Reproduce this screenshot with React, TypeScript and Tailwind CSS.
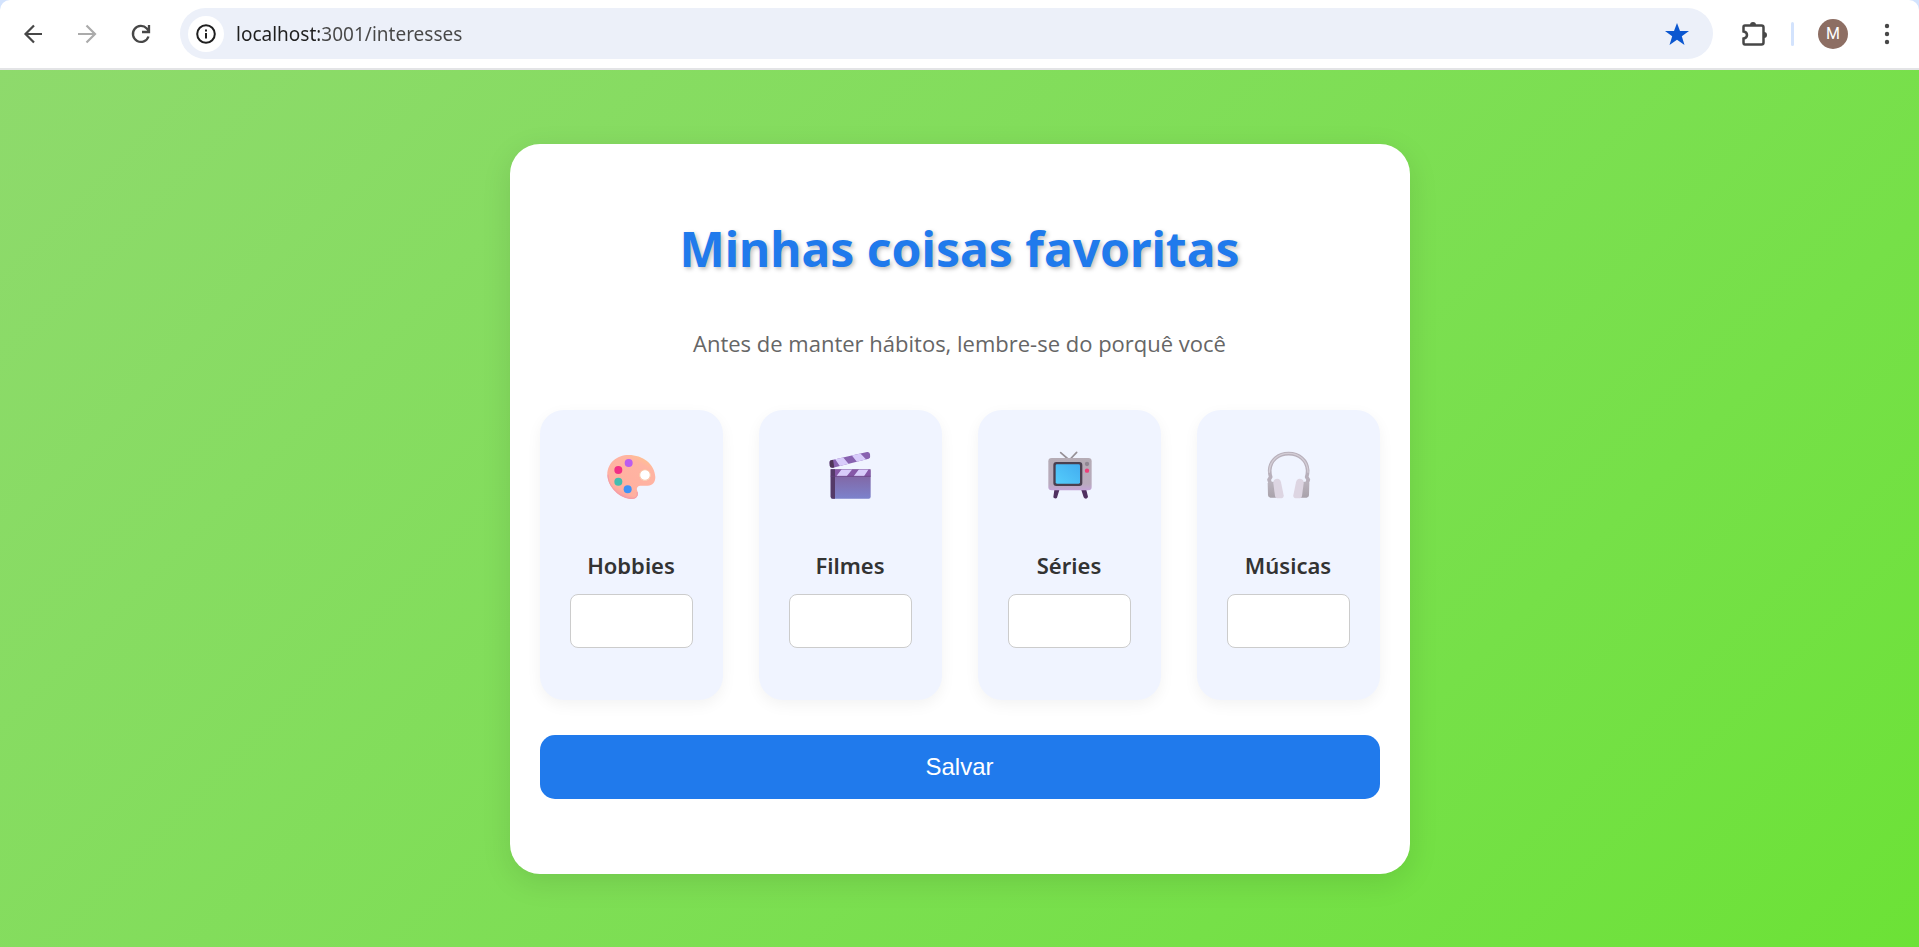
import type { ReactNode } from "react";

function PaletteIcon() {
  return (
    <svg viewBox="78 63 153 153" className="size-[51px]" aria-hidden="true">
      <defs>
        <linearGradient id="pal" x1="0.2" y1="1" x2="0.8" y2="0">
          <stop offset="0" stopColor="#f88fa0" />
          <stop offset="0.2" stopColor="#ffb0a0" />
          <stop offset="0.8" stopColor="#ffb4a2" />
          <stop offset="1" stopColor="#ffc58a" />
        </linearGradient>
      </defs>
      <path
        fillRule="evenodd"
        fill="url(#pal)"
        d="M146 75C110 75 82 99 82 134C82 171 120 207 157 207C172 207 177 194 172 183C168 173 173 167 184 167L203 167C218 167 226 156 226 141C224 101 188 75 146 75ZM195 119A16.500 16.500 0 1 1 195 152A16.500 16.500 0 1 1 195 119Z"
      />
      <path d="M84 134C84 171 121 205 157 205C170 205 174 195 171 186" fill="none" stroke="#f39cab" strokeWidth="3" />
      <circle cx="195" cy="135" r="16" fill="#ffffff" stroke="#fcc3a0" strokeWidth="3" />
      <circle cx="146" cy="99" r="12" fill="#bb5cf0" />
      <circle cx="115" cy="120" r="12" fill="#f12f86" />
      <circle cx="115" cy="155" r="12" fill="#43bdb0" />
      <circle cx="143" cy="178" r="12" fill="#3f92f7" />
    </svg>
  );
}

function ClapperIcon() {
  return (
    <svg viewBox="75 63 153 153" className="size-[51px]" aria-hidden="true">
      <defs>
        <linearGradient id="clapBody" x1="0" y1="0" x2="0" y2="1">
          <stop offset="0" stopColor="#83609b" />
          <stop offset="1" stopColor="#7c82cc" />
        </linearGradient>
        <clipPath id="clapArm">
          <path d="M93 91L201 66Q208 65 210 72L211 79Q211 84 206 86L99 113Q91 115 89 107L88 98Q88 92 93 91Z" />
        </clipPath>
        <clipPath id="clapStrip">
          <path d="M92 118H207Q212 118 212 123V140H92Z" />
        </clipPath>
      </defs>
      <g clipPath="url(#clapArm)">
        <path d="M80 60H220V120H80Z" fill="#8862b0" />
        <path d="M103 84L126 78L148 104L122 112ZM152 72L177 66L200 90L173 98Z" fill="#d8ccfb" />
        <path d="M85 88H99L103 114H85Z" fill="#4e3558" />
      </g>
      <path d="M92 118H212V200Q212 206 206 206H98Q92 206 92 200Z" fill="url(#clapBody)" />
      <g clipPath="url(#clapStrip)">
        <path d="M92 116H214V140H92Z" fill="#8658a8" />
        <path d="M125 118H157L140 139H109ZM177 118H206L192 139H161Z" fill="#d8ccfb" />
      </g>
      <path d="M92 118H105V206H98Q92 206 92 200Z" fill="#543a68" />
      <path d="M92 139H212" stroke="#653f81" strokeWidth="2" />
    </svg>
  );
}

function TelevisionIcon() {
  return (
    <svg viewBox="72 63 153 153" className="size-[51px]" aria-hidden="true">
      <defs>
        <linearGradient id="tvBody" x1="0" y1="0" x2="0" y2="1">
          <stop offset="0" stopColor="#b5acb5" />
          <stop offset="0.8" stopColor="#b9aabd" />
          <stop offset="1" stopColor="#c3a4d8" />
        </linearGradient>
        <linearGradient id="tvScreen" x1="1" y1="0" x2="0" y2="1">
          <stop offset="0" stopColor="#43adf0" />
          <stop offset="1" stopColor="#54cdfb" />
        </linearGradient>
      </defs>
      <path d="M122 68L144 87M170 67L151 87" stroke="#969096" strokeWidth="5" strokeLinecap="round" />
      <path d="M103 180H118L111 203Q109 206 104 205Q100 204 100 201ZM184 180H199L204 200Q203 205 198 206Q193 206 191 202Z" fill="#503160" />
      <rect x="85" y="84" width="130" height="97" rx="10" fill="url(#tvBody)" />
      <rect x="100" y="96" width="87" height="72" rx="9" fill="#4a4050" />
      <rect x="107" y="103" width="73" height="58" rx="4" fill="url(#tvScreen)" />
      <circle cx="201" cy="102" r="6.500" fill="#908792" />
      <circle cx="201" cy="122" r="6.500" fill="#ed3d78" />
    </svg>
  );
}

function HeadphonesIcon() {
  return (
    <svg viewBox="69 63 153 153" className="size-[51px]" aria-hidden="true">
      <defs>
        <linearGradient id="cup" x1="0" y1="0" x2="0" y2="1">
          <stop offset="0" stopColor="#bab3bd" />
          <stop offset="1" stopColor="#a9a2ab" />
        </linearGradient>
      </defs>
      <path
        d="M91 160L87 149L92 141C89 133 89 126 89 121C91 90 115 71 146 71C177 71 201 90 203 121C203 126 203 133 200 141L205 149L201 160"
        fill="none"
        stroke="#b8b0bb"
        strokeWidth="11"
        strokeLinecap="round"
        strokeLinejoin="round"
      />
      <path d="M88 128C88 92 115 70 146 70C177 70 204 92 204 128" fill="none" stroke="#d3cdd6" strokeWidth="4" />
      <path d="M83 159Q91 153 104 156L112 203H91Q84 202 84 196Z" fill="url(#cup)" />
      <path d="M208 159Q200 153 187 156L179 203H200Q207 202 207 196Z" fill="url(#cup)" />
      <path d="M107 147Q120 143 123 157L131 196Q132 204 124 205H112Q106 205 105 198L100 160Q99 150 107 147Z" fill="#ddd5e2" />
      <path d="M184 147Q171 143 168 157L160 196Q159 204 167 205H179Q185 205 186 198L191 160Q192 150 184 147Z" fill="#ddd5e2" />
    </svg>
  );
}

const categories: { id: string; label: string; icon: ReactNode }[] = [
  { id: "hobbies", label: "Hobbies", icon: <PaletteIcon /> },
  { id: "filmes", label: "Filmes", icon: <ClapperIcon /> },
  { id: "series", label: "Séries", icon: <TelevisionIcon /> },
  { id: "musicas", label: "Músicas", icon: <HeadphonesIcon /> },
];

function BrowserBar() {
  return (
    <header className="bg-[#d3e3fd]">
      <div className="flex h-[70px] items-center rounded-t-[10px] border-b-2 border-[#e3e4e6] bg-white px-[19px] pb-px">
        <nav className="flex items-center gap-[26px]" aria-label="Navegação">
          <button type="button" aria-label="Voltar" className="grid size-7 place-items-center text-[#474747]">
            <svg viewBox="0 0 28 28" className="size-7" fill="none" stroke="currentColor" strokeWidth="2.2">
              <path d="M23 14H7M15 5.500L6.500 14L15 22.500" />
            </svg>
          </button>
          <button type="button" aria-label="Avançar" className="grid size-7 place-items-center text-[#ababab]">
            <svg viewBox="0 0 28 28" className="size-7" fill="none" stroke="currentColor" strokeWidth="2.200">
              <path d="M5 14H21.500M13.500 5.500L22 14L13.500 22.500" />
            </svg>
          </button>
          <button type="button" aria-label="Recarregar" className="grid size-7 place-items-center text-[#474747]">
            <svg viewBox="0 0 28 28" className="size-7" fill="none" stroke="currentColor" strokeWidth="2.300">
              <path d="M21.500 16.500A8 8 0 1 1 19.800 8.500L22 11M22 5V12H15" />
            </svg>
          </button>
        </nav>
        <div className="ml-[25px] flex h-[51px] flex-1 items-center rounded-full bg-[#ecf0f9] pr-[23px] pl-2">
          <button type="button" aria-label="Informações do site" className="grid size-9 place-items-center rounded-full bg-white text-[#1f1f1f]">
            <svg viewBox="0 0 20 20" className="size-5" fill="none" stroke="currentColor" strokeWidth="2">
              <circle cx="10" cy="10" r="8.800" />
              <path d="M10 9V14.500M10 5.500V7.500" />
            </svg>
          </button>
          <input
            type="text"
            aria-label="Endereço"
            defaultValue="localhost:3001/interesses"
            className="ml-3 h-8 min-w-0 flex-1 bg-linear-to-r from-[#1f1f1f] from-[83px] to-[#474747] to-[83px] bg-clip-text font-['Noto_Sans',sans-serif] text-[19px] text-transparent caret-[#1f1f1f] outline-none"
          />
          <button type="button" aria-label="Favorito" className="text-[#0b57d0]">
            <svg viewBox="0 0 26 26" className="size-[26px]" fill="currentColor">
              <path d="M13 2L16 10H25L17.800 15.300L20.500 24L13 18.700L5.500 24L8.200 15.300L1 10H10Z" />
            </svg>
          </button>
        </div>
        <button type="button" aria-label="Extensões" className="ml-7 text-[#474747]">
          <svg viewBox="0 0 28 28" className="size-7" fill="none" stroke="currentColor" strokeWidth="2.500">
            <path d="M4 5.500H20.500Q22.500 5.500 22.500 7.500V22.500Q22.500 24.500 20.500 24.500H4Q2.500 24.500 2.500 22.500V18.500Q6 18 6 15Q6 12 2.500 11.500V7Q2.500 5.500 4 5.500Z" />
            <path d="M9 5A3 3 0 0 1 15 5ZM23 12A3 3 0 0 1 23 18Z" fill="currentColor" stroke="none" />
          </svg>
        </button>
        <span className="ml-[22px] h-6 w-[3px] rounded-full bg-[#d3e3fd]" />
        <button type="button" aria-label="Perfil" className="ml-6 grid size-[30px] place-items-center rounded-full bg-[#8d6e63] font-['Roboto',sans-serif] text-base leading-5 text-white">
          M
        </button>
        <button type="button" aria-label="Menu" className="ml-6 text-[#474747]">
          <svg viewBox="0 0 28 28" className="size-7" fill="currentColor">
            <circle cx="15" cy="6" r="2.200" />
            <circle cx="15" cy="14" r="2.200" />
            <circle cx="15" cy="22" r="2.200" />
          </svg>
        </button>
      </div>
    </header>
  );
}

export default function App() {
  return (
    <div className="flex min-h-screen flex-col">
      <BrowserBar />
      <main className="flex flex-1 items-center justify-center bg-linear-135 from-[#8eda6c] to-[#6ce236] px-6 py-[73px] font-['Noto_Sans',sans-serif]">
        <section className="w-full max-w-[900px] rounded-[30px] bg-white px-[30px] pt-[73px] pb-[75px] text-center shadow-[0_8px_30px_rgba(0,0,0,0.1)]">
          <h1 className="text-5xl leading-[64px] font-bold text-[#207aec] [text-shadow:2px_2px_4px_rgba(0,0,0,0.25)]">Minhas coisas favoritas</h1>
          <p className="mt-11 font-['Open_Sans',sans-serif] text-[22px] leading-9 text-[#666666]">Antes de manter hábitos, lembre-se do porquê você</p>
          <form>
            <div className="mt-[49px] grid grid-cols-4 gap-9">
              {categories.map(({ id, label, icon }) => (
                <div key={id} className="flex flex-col items-center rounded-3xl bg-[#f0f4ff] px-[30px] pt-[41px] pb-[52px] shadow-[0_5px_15px_rgba(0,0,0,0.05)]">
                  {icon}
                  <label htmlFor={id} className="mt-[45px] text-[22px] leading-9 font-semibold text-[#333333]">
                    {label}
                  </label>
                  <input id={id} type="text" className="mt-[11px] h-[54px] w-full rounded-lg border border-[#cccccc] bg-white px-3 text-lg" />
                </div>
              ))}
            </div>
            <button type="button" className="mt-[35px] h-16 w-full rounded-[15px] bg-[#207aec] font-['Liberation_Sans',sans-serif] text-2xl text-white">
              Salvar
            </button>
          </form>
        </section>
      </main>
    </div>
  );
}
